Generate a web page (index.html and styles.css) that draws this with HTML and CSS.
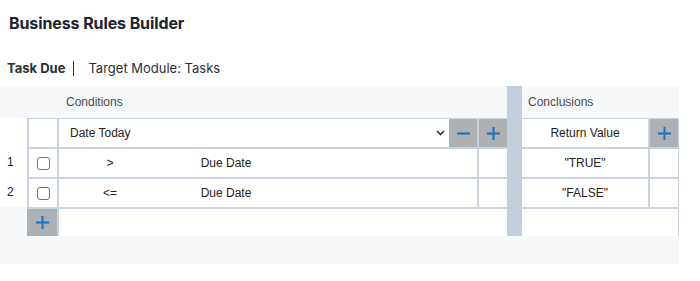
FILE: index.html
```html
<!DOCTYPE html>
<html lang="en">
<head>
    <meta charset="UTF-8" />
    <meta name="viewport" content="width=device-width, initial-scale=1.0"/>
    <title>Business Rules Builder</title>
    <link rel="stylesheet" href="styles.css">
</head>
<body>
<h1 class="page-title">Business Rules Builder</h1>
<div class="rule-meta">
    <span class="rule-name">Task Due</span>
    <span class="rule-target">Target Module: Tasks</span>
</div>

<div class="rules-panel">
    <div class="rules-body">
        <!-- Conditions -->
        <section class="conditions">
            <div class="section-head">Conditions</div>
            <div class="cond-grid">
                <div class="num"></div>
                <div class="cell first-row"></div>
                <div class="cell first-row field-cell">
                    <div class="field-select">
                        <span>Date Today</span>
                        <svg class="chevron" width="9" height="6" viewBox="0 0 9 6"><path d="M1 1l3.5 3.5L8 1" fill="none" stroke="#2b2f36" stroke-width="1.6"/></svg>
                    </div>
                    <button class="tool-btn" title="Remove column">
                        <svg width="13" height="13" viewBox="0 0 13 13"><path d="M0 6.5h13" stroke="#1672c4" stroke-width="2"/></svg>
                    </button>
                </div>
                <div class="cell first-row">
                    <button class="tool-btn" title="Add column">
                        <svg width="13" height="13" viewBox="0 0 13 13"><path d="M0 6.5h13M6.5 0v13" stroke="#1672c4" stroke-width="2"/></svg>
                    </button>
                </div>

                <div class="num">1</div>
                <div class="cell check-cell"><input type="checkbox" class="row-check"></div>
                <div class="cell cond-cell"><span class="op">&gt;</span><span class="val">Due Date</span></div>
                <div class="cell"></div>

                <div class="num">2</div>
                <div class="cell check-cell"><input type="checkbox" class="row-check"></div>
                <div class="cell cond-cell"><span class="op">&lt;=</span><span class="val">Due Date</span></div>
                <div class="cell"></div>

                <div class="num empty"></div>
                <div class="add-cell">
                    <button class="tool-btn" title="Add row">
                        <svg width="13" height="13" viewBox="0 0 13 13"><path d="M0 6.5h13M6.5 0v13" stroke="#1672c4" stroke-width="2"/></svg>
                    </button>
                </div>
                <div class="cell span-cell"></div>
            </div>
        </section>

        <div class="divider"></div>

        <!-- Conclusions -->
        <section class="conclusions">
            <div class="section-head">Conclusions</div>
            <div class="conc-grid">
                <div class="cell first-row center">Return Value</div>
                <div class="cell first-row side-cell">
                    <button class="tool-btn" title="Add conclusion">
                        <svg width="13" height="13" viewBox="0 0 13 13"><path d="M0 6.5h13M6.5 0v13" stroke="#1672c4" stroke-width="2"/></svg>
                    </button>
                </div>
                <div class="cell center">"TRUE"</div>
                <div class="cell side-cell"></div>
                <div class="cell center">"FALSE"</div>
                <div class="cell side-cell"></div>
                <div class="cell span-cell edge"></div>
            </div>
        </section>
    </div>
</div>
</body>
</html>
```

FILE: styles.css
```css
html, body { margin: 0; padding: 0; background: #fff; }
body { font-family: Inter, "Noto Sans", sans-serif; color: #1f2533; }

.page-title { margin: 0; padding: 13px 9px 0; font-size: 16px; line-height: 20px; font-weight: 700; letter-spacing: -0.1px; color: #1e2330; }

.rule-meta { display: flex; align-items: center; margin: 25px 0 8px; padding-left: 7px; font-size: 13px; line-height: 20px; color: #2b2f38; }
.rule-name { font-weight: 700; padding-right: 8px; border-right: 1px solid #2b2f38; line-height: 15px; }
.rule-target { padding-left: 14px; }

.rules-panel { width: 679px; background: #f7f8fa; padding-bottom: 28px; font-family: "Liberation Sans", Arial, sans-serif; font-size: 12px; color: #222; }
.rules-body { display: flex; }

.section-head { height: 32px; display: flex; align-items: center; color: #474a4f; }
.conditions .section-head { padding-left: 66px; }
.conclusions .section-head { padding-left: 6px; }

.conditions { width: 507px; }
.divider { width: 15px; background: #c3cedb; }
.conclusions { width: 157px; }

.cond-grid { display: grid; grid-template-columns: 27px 30px 420px 30px; grid-template-rows: 29px 30px 30px 29px; }
.conc-grid { display: grid; grid-template-columns: 126px 31px; grid-template-rows: 29px 30px 30px 29px; }

.cell { background: #fff; border-top: 2px solid #c8d3df; border-left: 2px solid #c8d3df; box-sizing: border-box; display: flex; align-items: center; }
.cell.first-row { border-top-width: 1px; }
.conc-grid .cell { border-left: none; }
.conc-grid .side-cell { border-left: 2px solid #c8d3df; border-right: 1px solid #c8d3df; }
.conc-grid .edge { border-right: 1px solid #c8d3df; }
.span-cell { grid-column: 1 / -1; }
.cond-grid .span-cell { grid-column: 3 / 5; }
.center { justify-content: center; }

.num { background: #fff; display: flex; align-items: center; padding-left: 7px; box-sizing: border-box; }
.num.empty { background: transparent; }

.check-cell { justify-content: center; }
.row-check { appearance: none; -webkit-appearance: none; margin: 0; width: 13px; height: 13px; border: 1px solid #6f7276; border-radius: 3px; background: #fff; }

.field-cell { align-items: stretch; }
.field-select { flex: 1; display: flex; align-items: center; justify-content: space-between; padding: 0 4px 0 11px; }
.chevron { display: block; }

.cond-cell { display: grid; grid-template-columns: 102px 130px; }
.cond-cell .op, .cond-cell .val { text-align: center; }

.tool-btn { width: 28px; height: 100%; border: none; margin: 0; padding: 0; background: #adb1b4; display: flex; align-items: center; justify-content: center; cursor: pointer; }
.tool-btn svg { display: block; }
.add-cell { border-top: 2px solid #c8d3df; display: flex; }
.add-cell .tool-btn { width: 30px; }
```
